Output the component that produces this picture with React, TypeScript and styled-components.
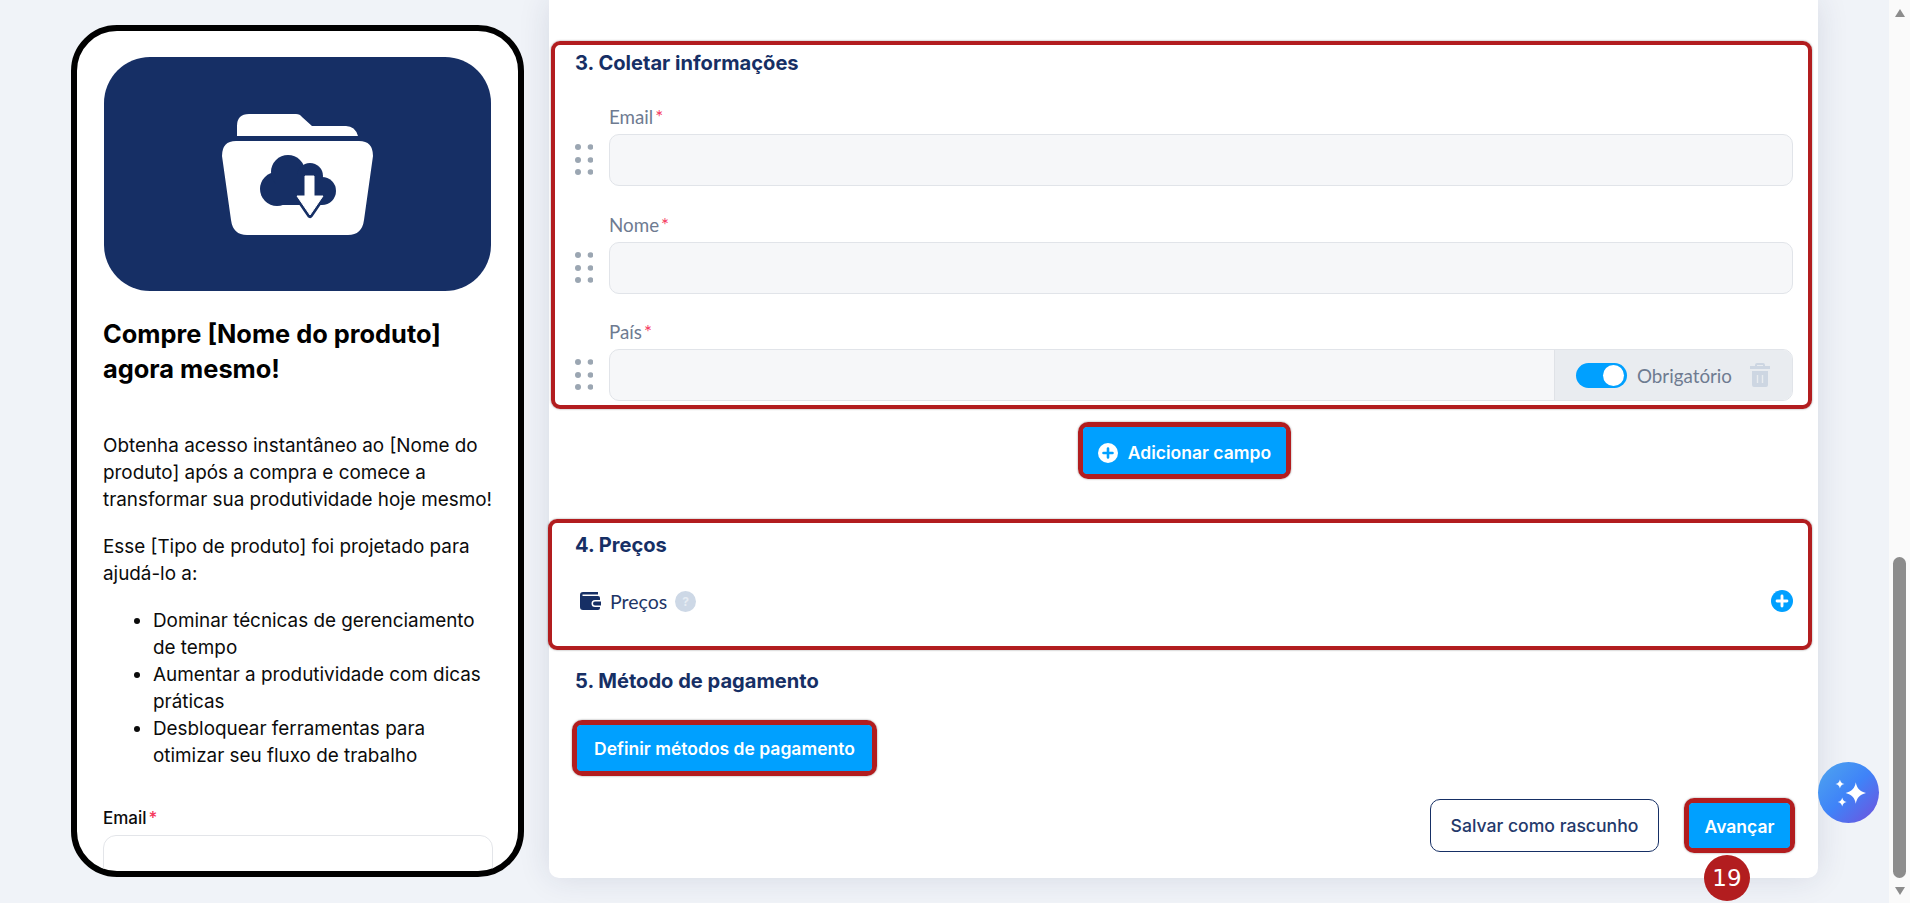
import styled, { createGlobalStyle } from 'styled-components';

const NAVY = '#162f65';
const BLUE = '#00a0ff';
const RED = '#b21d1f';

const GlobalStyle = createGlobalStyle`
  html, body {
    margin: 0;
    padding: 0;
    height: 100%;
    overflow: hidden;
    background: #f0f3f8;
    font-family: Inter, "Liberation Sans", sans-serif;
  }
  * { box-sizing: border-box; }
`;

function FolderIcon() {
  const arrow = 'M83 62H92V82H101L88 101L75 82H83Z';
  return (
    <svg width="151" height="121" viewBox="0 0 151 121">
      <path fill="#fff" d="M15 22V12Q15 0 27 0H74Q78 0 80 3L90 12H124Q133 12 136 22Z" />
      <path fill="#fff" d="M14 27H137Q151 27 151 42L142 106Q140 121 126 121H25Q11 121 9 106L0 42Q0 27 14 27Z" />
      <g fill={NAVY}>
        <circle cx="55" cy="75" r="17" />
        <circle cx="66" cy="58" r="17" />
        <circle cx="88" cy="62" r="13" />
        <circle cx="100" cy="77" r="14" />
        <rect x="54" y="60" width="46" height="31" />
      </g>
      <path fill={NAVY} stroke={NAVY} strokeWidth="6" strokeLinejoin="round" d={arrow} />
      <path fill="#fff" stroke="#fff" strokeWidth="1" strokeLinejoin="round" d={arrow} />
    </svg>
  );
}

function DragDots() {
  return (
    <svg width="18" height="32" viewBox="0 0 18 32">
      {[3, 16, 28].map((y) => (
        <g key={y} fill="#9ba6b2">
          <circle cx="3" cy={y} r="3" />
          <circle cx="15.5" cy={y} r="2.8" />
        </g>
      ))}
    </svg>
  );
}

function PlusCircle({ size, bg, fg }: { size: number; bg: string; fg: string }) {
  return (
    <svg width={size} height={size} viewBox="0 0 20 20">
      <circle cx="10" cy="10" r="10" fill={bg} />
      <path d="M10 5.500v9M5.500 10h9" stroke={fg} strokeWidth="2.6" strokeLinecap="round" />
    </svg>
  );
}

function TrashIcon() {
  return (
    <svg width="20" height="24" viewBox="0 0 20 24">
      <path fill="#cdd6e2" d="M7 0h6q2 0 2 2v1h5v3H0V3h5V2q0-2 2-2zm0 2v1h6V2zM2 8h16v14q0 2-2 2H4q-2 0-2-2z" />
      <path stroke="#e9ecf0" strokeWidth="1.4" d="M7.500 12v8M12.500 12v8" />
    </svg>
  );
}

function WalletIcon() {
  return (
    <svg width="21" height="18" viewBox="0 0 21 18">
      <path fill={NAVY} d="M3 0h15v2.500H2.500V4H18q2 0 2 2v2h-5a3.500 3.500 0 0 0 0 7h5v1q0 2-2 2H3q-3 0-3-3V3q0-3 3-3z" />
      <path fill={NAVY} d="M15 9.500h6v4h-6a2 2 0 0 1 0-4z" />
    </svg>
  );
}

function Sparkles() {
  return (
    <svg width="34" height="34" viewBox="0 0 30 30">
      <path fill="#fff" d="M21 5.500C22 11 24.500 13.500 30 15C24.500 16.500 22 19 21 24.500C20 19 17.500 16.500 12 15C17.500 13.500 20 11 21 5.500z" />
      <path fill="#fff" d="M7 3C7.500 5.500 8.500 6.500 11 7C8.500 7.500 7.500 8.500 7 11C6.500 8.500 5.500 7.500 3 7C5.500 6.500 6.500 5.500 7 3z" />
      <path fill="#fff" d="M9 19C9.500 21.500 10.500 22.500 13 23C10.500 23.500 9.500 24.500 9 27C8.500 24.500 7.500 23.500 5 23C7.500 22.500 8.500 21.500 9 19z" />
    </svg>
  );
}

export default function App() {
  return (
    <>
      <GlobalStyle />
      <Page>
        <Content>
          <Phone>
            <Hero>
              <FolderIcon />
            </Hero>
            <PhoneTitle>Compre [Nome do produto] agora mesmo!</PhoneTitle>
            <PhoneText>
              Obtenha acesso instantâneo ao [Nome do produto] após a compra e comece a transformar sua produtividade hoje mesmo!
            </PhoneText>
            <PhoneText>Esse [Tipo de produto] foi projetado para ajudá-lo a:</PhoneText>
            <PhoneList>
              <li>Dominar técnicas de gerenciamento de tempo</li>
              <li>Aumentar a produtividade com dicas práticas</li>
              <li>Desbloquear ferramentas para otimizar seu fluxo de trabalho</li>
            </PhoneList>
            <PhoneLabel>
              Email<Star>*</Star>
            </PhoneLabel>
            <PhoneInput />
          </Phone>

          <Panel>
            <CollectSection>
              <SectionTitle>3. Coletar informações</SectionTitle>
              <Fields>
                <FieldRow>
                  <Handle><DragDots /></Handle>
                  <Field>
                    <FieldLabel>Email<Star>*</Star></FieldLabel>
                    <FieldInput />
                  </Field>
                </FieldRow>
                <FieldRow>
                  <Handle><DragDots /></Handle>
                  <Field>
                    <FieldLabel>Nome<Star>*</Star></FieldLabel>
                    <FieldInput />
                  </Field>
                </FieldRow>
                <FieldRow>
                  <Handle><DragDots /></Handle>
                  <Field>
                    <FieldLabel>País<Star>*</Star></FieldLabel>
                    <FieldInput>
                      <FieldActions>
                        <Toggle><Knob /></Toggle>
                        <ActionText>Obrigatório</ActionText>
                        <TrashIcon />
                      </FieldActions>
                    </FieldInput>
                  </Field>
                </FieldRow>
              </Fields>
            </CollectSection>

            <AddRow>
              <Marked>
                <AddButton>
                  <PlusCircle size={20} bg="#fff" fg={BLUE} />
                  Adicionar campo
                </AddButton>
              </Marked>
            </AddRow>

            <PriceSection>
              <SectionTitle>4. Preços</SectionTitle>
              <PriceRow>
                <WalletIcon />
                <PriceText>Preços</PriceText>
                <Help>?</Help>
                <PriceAdd>
                  <PlusCircle size={22} bg={BLUE} fg="#fff" />
                </PriceAdd>
              </PriceRow>
            </PriceSection>

            <PaymentTitle>5. Método de pagamento</PaymentTitle>
            <PaymentRow>
              <Marked>
                <PaymentButton>Definir métodos de pagamento</PaymentButton>
              </Marked>
            </PaymentRow>

            <Footer>
              <DraftButton>Salvar como rascunho</DraftButton>
              <NextWrap>
                <Marked>
                  <NextButton>Avançar</NextButton>
                </Marked>
                <StepBadge>19</StepBadge>
              </NextWrap>
            </Footer>
          </Panel>

          <AssistantButton>
            <Sparkles />
          </AssistantButton>
        </Content>

        <ScrollTrack>
          <ArrowUp />
          <ScrollThumb />
          <ArrowDown />
        </ScrollTrack>
      </Page>
    </>
  );
}

const Page = styled.div`
  display: flex;
  height: 903px;
  overflow: hidden;
`;

const Content = styled.div`
  position: relative;
  flex: 1;
  display: flex;
  align-items: flex-start;
  gap: 25px;
  padding-left: 71px;
`;

const Phone = styled.div`
  width: 453px;
  height: 852px;
  margin-top: 25px;
  padding: 26px 27px 0;
  background: #fff;
  border: 6px solid #000;
  border-radius: 46px;
  overflow: hidden;
  color: #0b0b0b;
`;

const Hero = styled.div`
  height: 234px;
  display: flex;
  align-items: center;
  justify-content: center;
  background: ${NAVY};
  border-radius: 46px;
`;

const PhoneTitle = styled.h2`
  margin: 25px 0 0 -1px;
  font-size: 25.4px;
  line-height: 35px;
  font-weight: 700;
  color: #000;
`;

const PhoneText = styled.p`
  margin: 46px -4px 0 -1px;
  font-size: 18.88px;
  line-height: 27px;

  & + & {
    margin-top: 20px;
  }
`;

const PhoneList = styled.ul`
  margin: 20px 0 0 -1px;
  padding-left: 50px;
  font-size: 18.88px;
  line-height: 27px;
`;

const PhoneLabel = styled.div`
  margin: 37px 0 0 -1px;
  font-size: 17px;
  line-height: 24px;
  font-weight: 500;
`;

const Star = styled.span`
  margin-left: 2px;
  color: #f5365c;
`;

const PhoneInput = styled.div`
  width: 390px;
  height: 60px;
  margin: 5px 0 0 -1px;
  border: 1px solid #e3e5e9;
  border-radius: 13px;
`;

const Panel = styled.div`
  width: 1269px;
  height: 878px;
  padding-top: 41px;
  background: #fff;
  border-radius: 0 0 10px 10px;
  box-shadow: 0 0 32px rgba(30, 45, 80, 0.12);
`;

const Box = styled.section`
  border: 4px solid ${RED};
  border-radius: 9px;
  box-shadow: 0 0 2px rgba(60, 60, 60, 0.6);
`;

const CollectSection = styled(Box)`
  height: 368px;
  margin: 0 6px 0 2px;
  padding: 4px 15px 0 20px;
`;

const SectionTitle = styled.h3`
  margin: 0;
  font-size: 20.1px;
  line-height: 28px;
  font-weight: 700;
  color: ${NAVY};
`;

const Fields = styled.div`
  display: flex;
  flex-direction: column;
  gap: 28px;
  margin-top: 29px;
`;

const FieldRow = styled.div`
  display: flex;
  align-items: flex-end;
  gap: 16px;

  &:last-child {
    margin-top: -1px;
  }
`;

const Handle = styled.div`
  width: 18px;
  height: 52px;
  display: flex;
  align-items: center;
`;

const Field = styled.div`
  flex: 1;
`;

const FieldLabel = styled.div`
  height: 28px;
  font-family: Lato, "Liberation Sans", sans-serif;
  font-size: 18.8px;
  line-height: 22px;
  color: #6e7b91;
`;

const FieldInput = styled.div`
  height: 52px;
  display: flex;
  justify-content: flex-end;
  background: #f6f7f9;
  border: 1px solid #e1e4e9;
  border-radius: 10px;
  overflow: hidden;
`;

const FieldActions = styled.div`
  width: 238px;
  display: flex;
  align-items: center;
  padding-left: 21px;
  background: #e9ecf0;
  border-left: 1px solid #dfe2e7;
`;

const Toggle = styled.div`
  width: 51px;
  height: 25px;
  display: flex;
  align-items: center;
  justify-content: flex-end;
  padding-right: 3px;
  background: ${BLUE};
  border-radius: 13px;
`;

const Knob = styled.div`
  width: 21px;
  height: 21px;
  background: #fff;
  border-radius: 50%;
`;

const ActionText = styled.span`
  width: 123px;
  padding-left: 10px;
  font-family: Lato, "Liberation Sans", sans-serif;
  font-size: 18.8px;
  color: #6e7b91;
`;

const AddRow = styled.div`
  display: flex;
  justify-content: center;
  margin: 13px 0 0 2px;
`;

const Marked = styled.div`
  display: inline-flex;
  border: 5px solid ${RED};
  border-radius: 10px;
  box-shadow: 0 0 2px rgba(60, 60, 60, 0.6);
`;

const BlueButton = styled.button`
  display: inline-flex;
  align-items: center;
  justify-content: center;
  height: 46px;
  padding: 0;
  border: 0;
  border-radius: 4px;
  background: ${BLUE};
  color: #fff;
  font-family: Inter, "Liberation Sans", sans-serif;
  font-size: 17.5px;
  font-weight: 600;
`;

const AddButton = styled(BlueButton)`
  width: 203px;
  height: 47px;
  gap: 10px;
  padding-top: 4px;
`;

const PriceSection = styled(Box)`
  height: 131px;
  margin: 40px 6px 0 -1px;
  padding: 8px 15px 0 23px;
`;

const PriceRow = styled.div`
  display: flex;
  align-items: center;
  height: 24px;
  margin: 30px 0 0 5px;
`;

const PriceText = styled.span`
  margin-left: 9px;
  font-family: Lato, "Liberation Sans", sans-serif;
  font-size: 19.5px;
  color: #1e3566;
`;

const Help = styled.span`
  width: 21px;
  height: 21px;
  margin-left: 8px;
  display: flex;
  align-items: center;
  justify-content: center;
  background: #cdd8e6;
  border-radius: 50%;
  color: #e6ecf3;
  font-size: 12px;
  font-weight: 700;
`;

const PriceAdd = styled.span`
  margin-left: auto;
  display: flex;
`;

const PaymentTitle = styled(SectionTitle)`
  margin: 17px 0 0 26px;
`;

const PaymentRow = styled.div`
  margin: 25px 0 0 23px;
  height: 56px;
`;

const PaymentButton = styled(BlueButton)`
  width: 295px;
`;

const Footer = styled.div`
  display: flex;
  justify-content: flex-end;
  align-items: center;
  gap: 25px;
  margin-top: 22px;
  padding-right: 23px;
`;

const DraftButton = styled.button`
  width: 229px;
  height: 53px;
  padding: 0;
  background: #fff;
  border: 1px solid ${NAVY};
  border-radius: 10px;
  color: #24396b;
  font-family: Inter, "Liberation Sans", sans-serif;
  font-size: 17.6px;
  font-weight: 500;
`;

const NextWrap = styled.div`
  position: relative;
  display: flex;
`;

const NextButton = styled(BlueButton)`
  width: 101px;
  height: 45px;
  padding-top: 2px;
`;

const StepBadge = styled.div`
  position: absolute;
  left: 20px;
  top: 57px;
  width: 46px;
  height: 46px;
  display: flex;
  align-items: center;
  justify-content: center;
  background: ${RED};
  border-radius: 50%;
  color: #fff;
  font-family: "DejaVu Sans", sans-serif;
  font-size: 23px;
`;

const AssistantButton = styled.div`
  position: absolute;
  left: 1818px;
  top: 762px;
  width: 61px;
  height: 61px;
  display: flex;
  align-items: center;
  justify-content: center;
  border-radius: 50%;
  background: linear-gradient(135deg, #4fa6ee 0%, #3f83f8 50%, #7250dc 100%);
`;

const ScrollTrack = styled.div`
  position: relative;
  width: 21px;
  height: 903px;
  display: flex;
  flex-direction: column;
  align-items: center;
  justify-content: flex-end;
  background: #fafafa;
`;

const ScrollThumb = styled.div`
  width: 13px;
  height: 321px;
  margin: 0 0 9px;
  background: #8c8c8c;
  border-radius: 7px;
`;

const ArrowDown = styled.div`
  width: 0;
  height: 0;
  margin-bottom: 8px;
  border-left: 5.5px solid transparent;
  border-right: 5.5px solid transparent;
  border-top: 8px solid #8c8c8c;
`;

const ArrowUp = styled.div`
  position: absolute;
  top: 9px;
  width: 0;
  height: 0;
  border-left: 5.5px solid transparent;
  border-right: 5.5px solid transparent;
  border-bottom: 8px solid #8c8c8c;
`;
